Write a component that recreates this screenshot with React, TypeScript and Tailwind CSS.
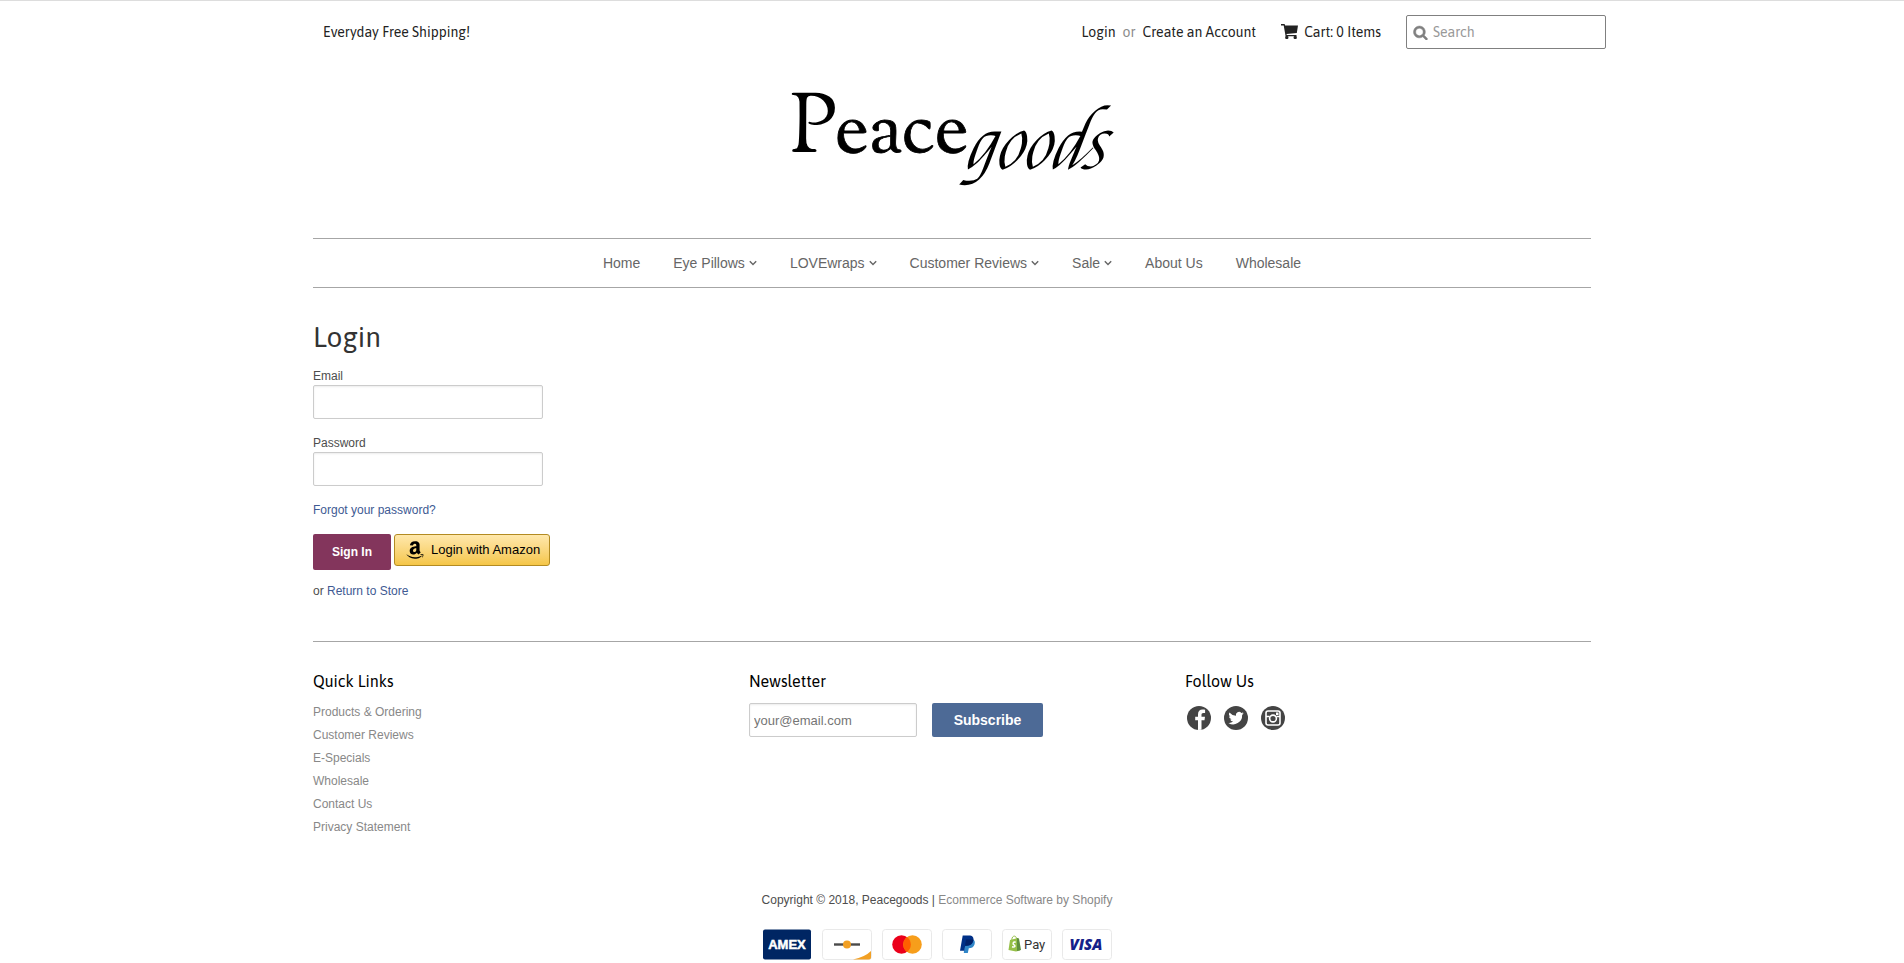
import { FaAmazon } from "react-icons/fa";

const navItems = [
  { label: "Home", menu: false },
  { label: "Eye Pillows", menu: true },
  { label: "LOVEwraps", menu: true },
  { label: "Customer Reviews", menu: true },
  { label: "Sale", menu: true },
  { label: "About Us", menu: false },
  { label: "Wholesale", menu: false },
];

const quickLinks = [
  "Products & Ordering",
  "Customer Reviews",
  "E-Specials",
  "Wholesale",
  "Contact Us",
  "Privacy Statement",
];

const display = "font-['Asap','Open_Sans',sans-serif]";

function Chevron() {
  return (
    <svg className="h-2 w-2" viewBox="0 0 8 8" fill="none" stroke="currentColor" strokeWidth="1.4" aria-hidden="true">
      <path d="M0.8 2.2 4 5.6 7.2 2.2" />
    </svg>
  );
}

function CartIcon() {
  return (
    <svg className="size-[17px]" viewBox="0 0 17 17" fill="currentColor" aria-hidden="true">
      <path d="M0 0h3.600l.5 1.500H17L15.800 9l-10.300.9.300 1.100H15.500v1.300H4.600L2.700 1.600H0z" />
      <rect x="4.200" y="12" width="3.200" height="3" rx="1" />
      <rect x="12.600" y="12" width="3.200" height="3" rx="1" />
    </svg>
  );
}

function SearchIcon() {
  return (
    <svg className="size-[15px] shrink-0 text-[#808080]" viewBox="0 0 1792 1792" fill="currentColor" stroke="currentColor" strokeWidth="60" aria-hidden="true">
      <path d="M1216 832q0-185-131.5-316.5t-316.5-131.5-316.5 131.5-131.5 316.5 131.5 316.5 316.5 131.5 316.5-131.5 131.5-316.5zm512 832q0 52-38 90t-90 38q-54 0-90-38l-343-342q-179 124-399 124-143 0-273.5-55.5t-225-150-150-225-55.5-273.5 55.5-273.5 150-225 225-150 273.5-55.5 273.5 55.5 225 150 150 225 55.5 273.5q0 220-124 399l343 343q37 37 37 90z" />
    </svg>
  );
}

function Logo() {
  return (
    <svg className="h-[136px] w-[330px]" viewBox="0 0 330 136" role="img" aria-label="Peacegoods">
      <text x="3" y="83" fontFamily="'Sorts Mill Goudy', 'Liberation Serif', serif" fontSize="84">P</text>
      <text x="48" y="83" fontFamily="'Sorts Mill Goudy', 'Liberation Serif', serif" fontSize="73" stroke="currentColor" strokeWidth="0.8">eace</text>
      <text x="178" y="100" fontFamily="'Felipa', 'Liberation Serif', serif" fontStyle="italic" fontSize="75">goods</text>
    </svg>
  );
}

function TopBar() {
  return (
    <div className={"-mr-[15px] flex h-[62px] items-center pl-2.5 text-sm text-[#222] " + display}>
      <p>Everyday Free Shipping!</p>
      <div className="ml-auto flex items-center">
        <a href="#login">Login</a>
        <span className="mx-[7px] text-[#8c8c8c]">or</span>
        <a href="#register">Create an Account</a>
        <a href="#cart" className="ml-[25px] flex items-center gap-1.5">
          <CartIcon />
          Cart: 0 Items
        </a>
        <label className="ml-[25px] flex h-[34px] w-[200px] items-center gap-[5px] rounded-xs border border-[#808080] px-1.5">
          <SearchIcon />
          <input type="search" aria-label="Search" placeholder="Search" className="w-full min-w-0 outline-none placeholder:text-[#999]" />
        </label>
      </div>
    </div>
  );
}

function Field({ id, label, type }: { id: string; label: string; type: string }) {
  return (
    <div className="mb-[15px] flex flex-col">
      <label htmlFor={id} className="leading-[18px]">{label}</label>
      <input id={id} type={type} className="h-[34px] w-[230px] rounded-xs border border-[#ccc] px-1 shadow-[inset_0_1px_2px_rgba(0,0,0,0.08)]" />
    </div>
  );
}

function LoginForm() {
  return (
    <main className="pt-[30px]">
      <h1 className={"mb-[11px] text-[28px] leading-[38px] text-[#333] " + display}>Login</h1>
      <form>
        <Field id="email" label="Email" type="email" />
        <Field id="password" label="Password" type="password" />
        <a href="#recover" className="block leading-[18px] text-[#405a93]">Forgot your password?</a>
        <div className="mt-[15px] flex items-start gap-[3px]">
          <button type="button" className="h-9 w-[78px] rounded-xs bg-[#83355c] font-bold text-white">Sign In</button>
          <button type="button" className="flex h-8 w-[156px] items-center gap-1.5 rounded-[3px] border border-[#b38b22] bg-linear-to-b from-[#ffe8ab] to-[#f5c646] pl-2.5 text-[13px] whitespace-nowrap text-black">
            <FaAmazon className="size-5 shrink-0" />
            Login with Amazon
          </button>
        </div>
        <p className="mt-3 leading-[18px]">
          or <a href="#store" className="text-[#405a93]">Return to Store</a>
        </p>
      </form>
    </main>
  );
}

function SocialLinks() {
  return (
    <div className="flex gap-[13px] pt-[3px] pl-0.5 text-[#444]">
      <a href="#facebook" aria-label="Facebook">
        <svg className="size-6" viewBox="0 0 24 24">
          <circle cx="12" cy="12" r="12" fill="currentColor" />
          <path fill="#fff" d="M11 23.900v-9.700H8.200v-3.400H11V8.600c0-3.300 1.700-5 4.600-5 1 0 1.900.1 2.500.2v3.100h-1.700c-1.500 0-1.900.8-1.900 1.900v2H18l-.5 3.400h-3v9.500z" />
        </svg>
      </a>
      <a href="#twitter" aria-label="Twitter">
        <svg className="size-6" viewBox="0 0 24 24">
          <circle cx="12" cy="12" r="12" fill="currentColor" />
          <path fill="#fff" transform="translate(4.400 4.400) scale(.64)" d="M24 4.600a10 10 0 0 1-2.800.8 5 5 0 0 0 2.100-2.700 10 10 0 0 1-3.100 1.200 4.900 4.900 0 0 0-8.400 4.500A14 14 0 0 1 1.700 3.200a4.900 4.900 0 0 0 1.500 6.500 5 5 0 0 1-2.200-.6 4.900 4.900 0 0 0 3.900 4.900 5 5 0 0 1-2.200.1 4.900 4.900 0 0 0 4.600 3.400A10 10 0 0 1 0 19.500a14 14 0 0 0 21.500-12.400A10 10 0 0 0 24 4.600z" />
        </svg>
      </a>
      <a href="#instagram" aria-label="Instagram">
        <svg className="size-6" viewBox="0 0 24 24">
          <circle cx="12" cy="12" r="12" fill="currentColor" />
          <rect x="5" y="5" width="14" height="14" rx="2" fill="none" stroke="#fff" strokeWidth="1.600" />
          <circle cx="12" cy="12.500" r="3.400" fill="none" stroke="#fff" strokeWidth="1.600" />
          <path stroke="#fff" strokeWidth="1.400" d="M5 10.500h3.500M15.500 10.500H19" />
          <rect x="15" y="6.500" width="2.500" height="2.500" fill="#fff" />
        </svg>
      </a>
    </div>
  );
}

function PaymentIcons() {
  const frame = <rect x="0.5" y="0.5" width="49" height="30" rx="3" fill="#fff" stroke="#e9e9e9" />;
  return (
    <ul className="flex gap-2.5">
      <li>
        <svg className="h-[31px] w-[50px]" viewBox="0 0 50 31" role="img" aria-label="American Express">
          <rect x="1" y="0.500" width="48" height="30" rx="2" fill="#002663" />
          <text x="25" y="20" textAnchor="middle" fontFamily="Liberation Sans, sans-serif" fontWeight="bold" fontSize="13" fill="#fff" stroke="#fff" strokeWidth="0.500">AMEX</text>
        </svg>
      </li>
      <li>
        <svg className="h-[31px] w-[50px]" viewBox="0 0 50 31" role="img" aria-label="Discover">
          {frame}
          <path d="M12 15.500h26" stroke="#4a4a4a" strokeWidth="2.400" />
          <circle cx="25" cy="15.500" r="4" fill="#f2a024" />
          <path d="M49 22v6.500a2 2 0 0 1-2 2H31Q43 28 49 22z" fill="#f2a024" />
        </svg>
      </li>
      <li>
        <svg className="h-[31px] w-[50px]" viewBox="0 0 50 31" role="img" aria-label="Mastercard">
          {frame}
          <circle cx="19.500" cy="15.500" r="9.300" fill="#eb001b" />
          <circle cx="30.500" cy="15.500" r="9.300" fill="#f79e1b" />
          <path d="M25 8a9.300 9.300 0 0 1 0 15 9.300 9.300 0 0 1 0-15z" fill="#ff5f00" />
        </svg>
      </li>
      <li>
        <svg className="h-[31px] w-[50px]" viewBox="0 0 50 31" role="img" aria-label="PayPal">
          {frame}
          <path d="M23 10h7.500c2.300 1 2.800 3 2 5.500-1 2.800-3 3.800-5.700 3.800L25.800 24h-4z" fill="#3086c8" />
          <path d="M20.700 6.500h6c4 0 5.500 2 4.500 5.500s-3.500 4.800-6.500 4.800h-1.500l-1 5h-4.200z" fill="#003087" />
          <path d="M24 10.500h7.300c-.3 4.300-3 6.200-6.700 6.200h-1.600z" fill="#012169" />
        </svg>
      </li>
      <li>
        <svg className="h-[31px] w-[50px]" viewBox="0 0 50 31" role="img" aria-label="Shopify Pay">
          {frame}
          <path d="M8 11l8-2 2 12.500-4 1-7.500-1.500z" fill="#95bf47" />
          <path d="M15 9l2 .5 2 11.500-4 1z" fill="#5e8e3e" />
          <path d="M9.800 11c0-5 4.700-5 4.700-1" fill="none" stroke="#95bf47" strokeWidth="1" />
          <path d="M13.700 12.500c-2.500-.8-3.500 1.500-1.700 2.600s1 2.700-2 1.900" transform="translate(0 .8)" fill="none" stroke="#fff" strokeWidth="1.500" />
          <text x="22" y="20" fontFamily="Roboto, sans-serif" fontSize="13" fill="#333">Pay</text>
        </svg>
      </li>
      <li>
        <svg className="h-[31px] w-[50px]" viewBox="0 0 50 31" role="img" aria-label="Visa">
          {frame}
          <text x="24" y="21" textAnchor="middle" fontFamily="Open Sans, sans-serif" fontStyle="italic" fontWeight="800" fontSize="15" fill="#15208a">VISA</text>
        </svg>
      </li>
    </ul>
  );
}

function Footer() {
  const heading = "text-base leading-6 text-black " + display;
  return (
    <footer className="mt-[41px] border-t border-[#a6a6a6] pt-[27px]">
      <div className="grid grid-cols-3 gap-[30px]">
        <section>
          <h2 className={heading}>Quick Links</h2>
          <ul className="mt-2 leading-[23px] text-[#888]">
            {quickLinks.map((link) => (
              <li key={link}><a href="#link">{link}</a></li>
            ))}
          </ul>
        </section>
        <section>
          <h2 className={heading}>Newsletter</h2>
          <form className="mt-2.5 flex gap-[15px]">
            <input type="email" aria-label="Email address" placeholder="your@email.com" className="h-[34px] w-[168px] rounded-xs border border-[#ccc] px-1 text-[13px] shadow-[inset_0_1px_2px_rgba(0,0,0,0.08)] placeholder:text-[#757575]" />
            <button type="button" className="h-[34px] w-[111px] rounded-xs bg-[#4d6a96] text-sm font-bold text-white">Subscribe</button>
          </form>
        </section>
        <section>
          <h2 className={heading + " mb-2.5"}>Follow Us</h2>
          <SocialLinks />
        </section>
      </div>
      <div className="mt-[52px] flex flex-col items-center gap-5 pr-[30px]">
        <p className="leading-[18px]">
          Copyright © 2018, Peacegoods | <a href="#shopify" className="text-[#888]">Ecommerce Software by Shopify</a>
        </p>
        <PaymentIcons />
      </div>
    </footer>
  );
}

export default function App() {
  return (
    <div className="border-t border-[#ddd] bg-white font-['Liberation_Sans',Arial,sans-serif] text-xs text-[#4d4d4d]">
      <div className="mx-auto max-w-[1278px]">
        <TopBar />
        <header>
          <a href="#home" className="flex justify-center pt-1.5 pb-[33px] text-black"><Logo /></a>
          <nav className="flex h-[50px] items-center justify-center gap-[33px] border-y border-[#a6a6a6] text-sm text-[#666]">
            {navItems.map((item) => (
              <a key={item.label} href="#nav" className="flex items-center gap-1">
                {item.label}
                {item.menu && <Chevron />}
              </a>
            ))}
          </nav>
        </header>
        <LoginForm />
        <Footer />
      </div>
    </div>
  );
}
